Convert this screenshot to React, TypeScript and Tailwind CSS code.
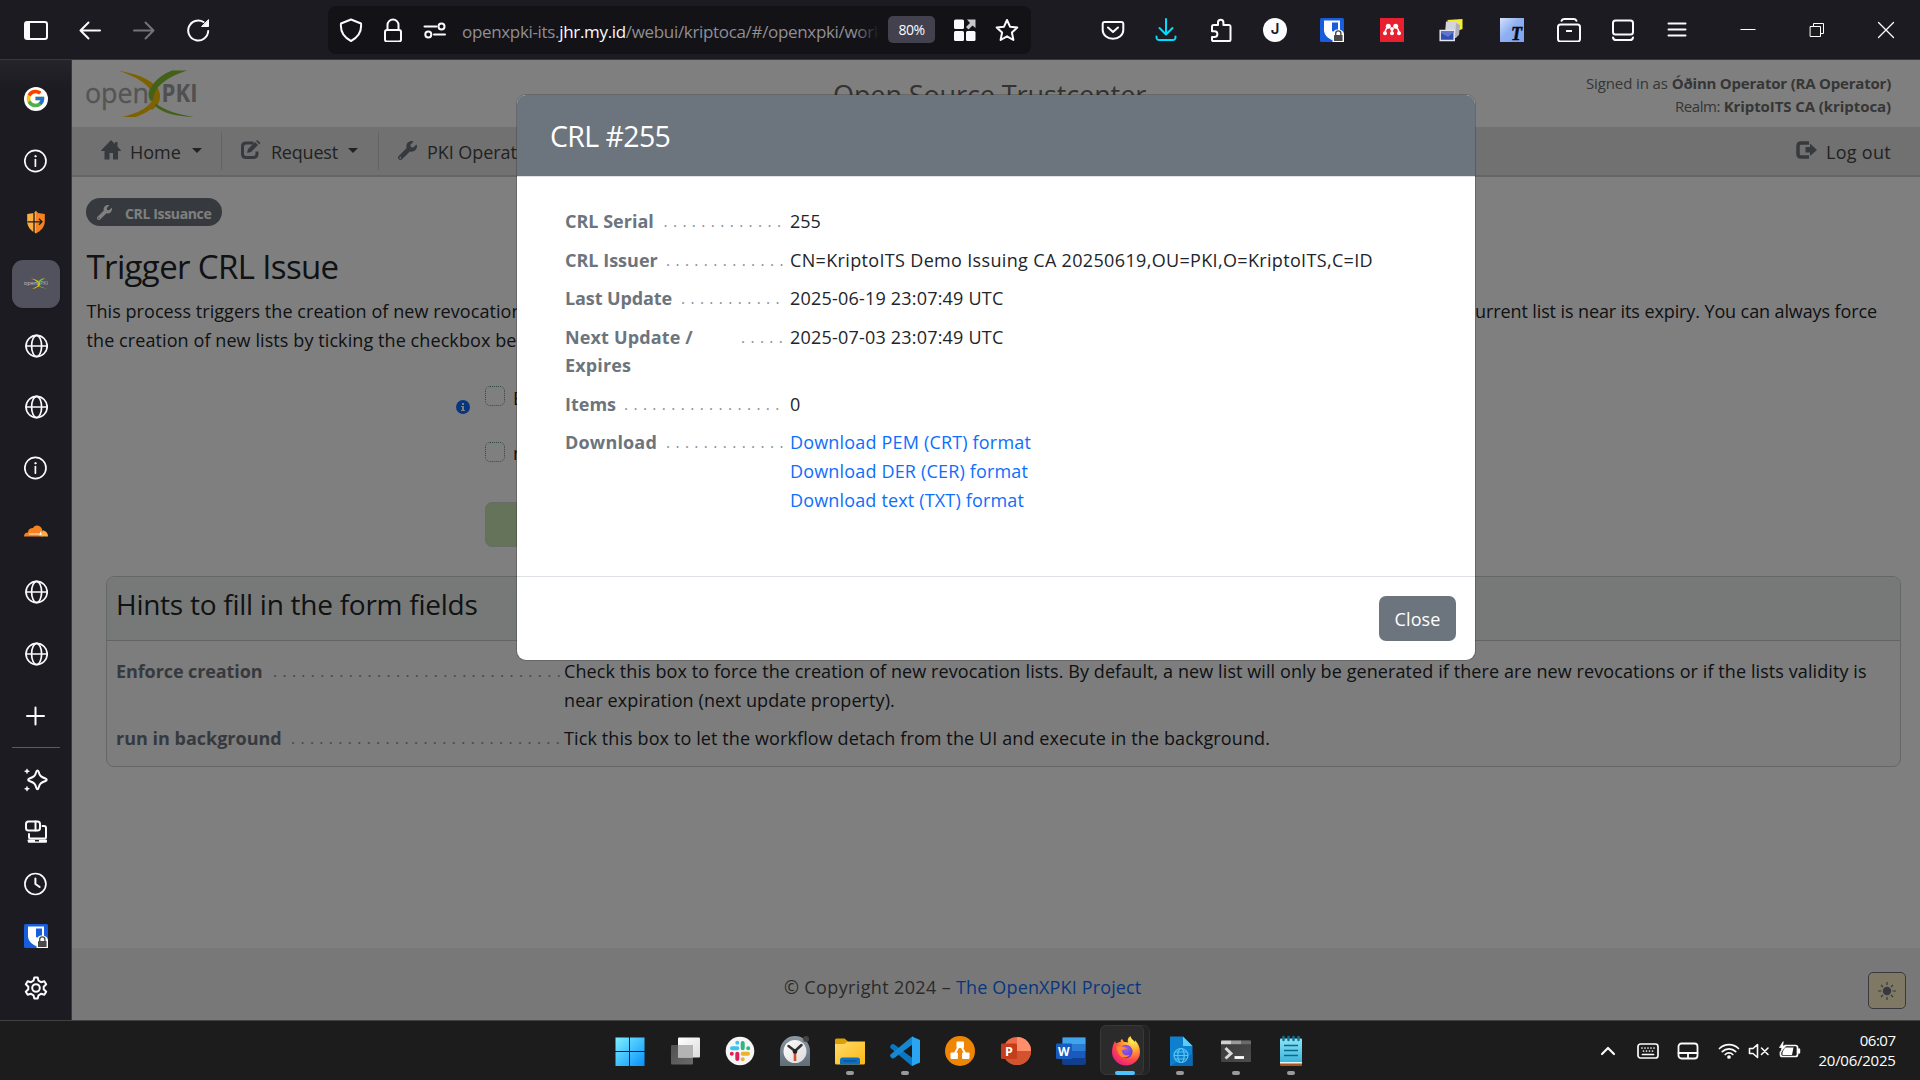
import React from "react";
import { FcGoogle } from "react-icons/fc";
import { FaWrench } from "react-icons/fa";

type Kids = { children?: React.ReactNode };

/* ---------- icon helpers ---------- */

function Line({ children, w = 2, c = "#fbfbfe", s = 24 }: Kids & { w?: number; c?: string; s?: number }) {
  return (
    <svg width={s} height={s} viewBox="0 0 24 24" fill="none" stroke={c} strokeWidth={w} strokeLinecap="round" strokeLinejoin="round" className="block shrink-0">
      {children}
    </svg>
  );
}

function Art({ children, s = 24 }: Kids & { s?: number }) {
  return (
    <svg width={s} height={s} viewBox="0 0 24 24" className="block shrink-0">
      {children}
    </svg>
  );
}

const Globe = () => (
  <Line w={1.7}>
    <circle cx="12.6" cy="12" r="10.6" />
    <ellipse cx="12.6" cy="12" rx="5" ry="10.6" />
    <path d="M2 12h21.2" />
  </Line>
);

const Info = () => (
  <Line w={1.7}>
    <circle cx="11.4" cy="12" r="10.6" />
    <path d="M11.4 10.6v6.6" />
    <circle cx="11.4" cy="7.2" r=".7" fill="#fbfbfe" strokeWidth="1" />
  </Line>
);

const Bitwarden = () => (
  <Art>
    <rect width="24" height="24" rx="1.6" fill="#175ddc" />
    <path d="M4 2.500h16V12c0 5-3.500 7.800-8 10-4.500-2.200-8-5-8-10z" fill="#fff" />
    <path d="M12 4.500h6V12c0 1.500-.5 2.500-1.500 3.500L12 13z" fill="#175ddc" />
    <path d="M12.500 24v-7.500c0-3 2.200-5 5.500-5s6 2 6 5V24z" fill="#fff" />
    <rect x="14" y="17" width="8.600" height="6" rx=".6" fill="#4a4a4a" />
    <path d="M15.700 17v-1.500a2.600 2.600 0 0 1 5.200 0V17" fill="none" stroke="#4a4a4a" strokeWidth="1.400" />
  </Art>
);

function Swoosh() {
  return (
    <>
      <path d="M32 .5c17 3 32 8 39 17 7 11-1 22-21 29.500H36c18-4 31-12 31-21C65 14 47 5.500 32 .500z" fill="#fdc400" />
      <path d="M70 15c6 9 6 18-4 25l-4-3c7-5 8-13 3-19z" fill="#fdc400" />
      <path d="M86 .500h15.500C84 6 68 15 67 30L64 28.500C62 17 70 7 86 .500z" fill="#86c232" />
      <path d="M66 16c-3 5-2 10 1 14l-2.500 1c-3-5-2.500-11 1.500-15z" fill="#86c232" />
      <path d="M70 33.500c9 7 22 11 38 13.500-17-.5-32-4-39-11z" fill="#86c232" />
    </>
  );
}

const Logo = () => (
  <svg width="112" height="48" viewBox="0 0 112 48" className="block shrink-0 overflow-visible">
    <text x="-1" y="32.500" fontFamily="'Open Sans', sans-serif" fontSize="28" fill="#a8a8a8" stroke="#a8a8a8" strokeWidth=".3" textLength="64" lengthAdjust="spacingAndGlyphs">open</text>
    <text x="75.500" y="32" fontFamily="'Open Sans', sans-serif" fontSize="24.500" fontWeight="bold" fill="#a0a0a0" textLength="36" lengthAdjust="spacingAndGlyphs">PKI</text>
    <Swoosh />
  </svg>
);

/* ---------- browser chrome ---------- */

function Toolbar() {
  return (
    <div className="flex h-[60px] shrink-0 items-center border-b border-[#38373d] bg-[#1c1b22]">
      <div className="ml-[24px] flex gap-[30px]">
        <Line w={2}>
          <rect x="1" y="4" width="22" height="17" rx="2.200" />
          <path d="M1 6a2 2 0 0 1 2-2h3v17H3a2 2 0 0 1-2-2z" fill="#fbfbfe" stroke="none" />
        </Line>
        <Line w={2}><path d="M22 12.500H2.500M10.500 4.500l-8 8 8 8" /></Line>
        <Line w={2} c="#74737a"><path d="M2 12.500h19.500M13.500 4.500l8 8-8 8" /></Line>
        <Line w={2}>
          <path d="M22.200 13A10 10 0 1 1 17.500 4" />
          <path d="M22.500 2v6.500H16z" fill="#fbfbfe" stroke="#fbfbfe" strokeWidth="1" />
        </Line>
      </div>

      <div className="ml-[118px] flex h-12 w-[703px] items-center rounded-[8px] bg-[#131217]">
        <div className="ml-[11px] flex gap-[18px]">
          <Line w={2}><path d="M12 1.500 22 5.500c.8 7.500-2 13.500-10 17.500C4 19 1.200 13 2 5.500z" /></Line>
          <Line w={2}>
            <rect x="4" y="12" width="16" height="11.500" rx="2" />
            <path d="M6.500 12V7a5.500 5.500 0 0 1 11 0v5" />
          </Line>
          <Line w={2}>
            <path d="M1.500 8.500h12M11 16.500h11" />
            <circle cx="18.500" cy="8.500" r="3" />
            <circle cx="5.300" cy="16.500" r="3" />
          </Line>
        </div>
        <div className="relative ml-[15px] w-[417px] overflow-hidden whitespace-nowrap pt-[4px] text-[17px] leading-[24px] tracking-[-0.330px] text-[#8f8e94]">
          openxpki-its.<span className="text-[#fbfbfe]">jhr.my.id</span>/webui/kriptoca/#/openxpki/workflow
          <div className="absolute inset-y-0 right-0 w-6 bg-gradient-to-r from-transparent to-[#131217]" />
        </div>
        <div className="ml-[9px] flex h-[27px] w-[47px] items-center justify-center rounded-[5px] bg-[#42414d] text-[14px] tracking-[-0.5px] text-[#fbfbfe]">80%</div>
        <div className="ml-[18px] flex gap-[18px]">
          <Art>
            <rect x="1" y="1.500" width="10" height="9.500" rx="1.500" fill="#fbfbfe" />
            <rect x="1" y="13" width="10" height="10" rx="1.500" fill="#fbfbfe" />
            <rect x="13" y="13" width="9.500" height="10" rx="1.500" fill="#fbfbfe" />
            <path d="M14 1.500h8.500V10l-3-2.500-4 4-2.500-2.500 4-4z" fill="#c8c8cc" />
          </Art>
          <Line w={2}><path d="m12 2 3 6.700 7.300.8-5.400 5 1.500 7.500-6.400-3.700L5.600 22l1.500-7.500-5.400-5L9 8.700z" /></Line>
        </div>
      </div>

      <div className="ml-[70px] flex items-center">
        <Line w={2}>
          <path d="M3.500 4h17a1.800 1.800 0 0 1 1.800 1.800V12a10.300 8.800 0 0 1-20.600 0V5.800A1.800 1.800 0 0 1 3.500 4z" />
          <path d="m7 9.500 5 4.500 5-4.500" />
        </Line>
        <div className="ml-[29px]"><Line w={2} c="#00ddff"><path d="M12 1v15M5.500 10l6.500 6.500L18.500 10M2.500 18.500c0 3 1 3.500 3 3.500h13c2 0 3-.5 3-3.500" /></Line></div>
        <div className="ml-[32px]"><Line w={2}><path d="M2 10V8.500A1.500 1.500 0 0 1 3.500 7H8V4.500a2.700 2.700 0 0 1 5.400 0V7h5A1.600 1.600 0 0 1 20.500 8.600V21.400A1.600 1.600 0 0 1 18.900 23H3.600A1.600 1.600 0 0 1 2 21.400V19h2.500a2.900 2.900 0 0 0 0-5.800H2z" /></Line></div>
        <div className="ml-[29px] flex h-6 w-6 items-center justify-center rounded-full bg-[#fbfbfe] font-['Inter'] text-[15px] font-semibold text-[#1c1b22]">J</div>
        <div className="ml-[33px]"><Bitwarden /></div>
        <div className="ml-[36px]">
          <Art>
            <rect width="24" height="24" fill="#e9202f" />
            <path d="M5 15.500C5 12 6 10.500 8 9M12 15.500V12M19 15.500C19 12 18 10.500 16 9" stroke="#fff" strokeWidth="1.500" fill="none" />
            <g fill="#fff">
              <circle cx="8.300" cy="8.300" r="2.500" /><circle cx="15.700" cy="8.300" r="2.500" /><circle cx="12" cy="10.800" r="1.900" />
              <circle cx="5" cy="15.300" r="2" /><circle cx="12" cy="15.300" r="2" /><circle cx="19" cy="15.300" r="2" />
            </g>
          </Art>
        </div>
        <div className="ml-[35px]">
          <Art>
            <path d="M8 2l15.500-1v10L18 13z" fill="#f6ee2c" />
            <path d="M7 3.500 17 3l3 3-2 13-4 2-8-6z" fill="#d4d4de" />
            <path d="M17 5l4 2-1 10-4 3z" fill="#b0b0bd" />
            <rect x="1.200" y="12.500" width="14" height="10" fill="#2f4fb4" stroke="#e6e6f0" strokeWidth="1.500" />
            <path d="M2 15l7 4 6-5v-1H2z" fill="#5f76cc" />
          </Art>
        </div>
        <div className="ml-[37px]">
          <Art>
            <defs><linearGradient id="sky" x1="0" y1="0" x2="1" y2="1"><stop offset="0" stopColor="#d5e2fb" /><stop offset=".45" stopColor="#8fb0f2" /><stop offset="1" stopColor="#7da1ee" /></linearGradient></defs>
            <rect width="24" height="24" fill="url(#sky)" />
            <text x="11" y="22" fontFamily="'Liberation Serif', serif" fontSize="18" fontStyle="italic" fontWeight="bold" fill="#0a0a14" stroke="#0a0a14" strokeWidth=".5">T</text>
          </Art>
        </div>
        <div className="ml-[33px]"><Line w={2}><path d="M4.500 2.800c.5-1.300 1.500-1.800 3-1.800h9c1.500 0 2.500.5 3 1.800" /><rect x="1" y="6.500" width="22" height="17" rx="2.500" /><path d="M9 13h6" strokeLinecap="butt" /></Line></div>
        <div className="ml-[30px]"><Line w={2}><rect x="2" y="2.500" width="20" height="14" rx="2.500" /><path d="M2 19.500c.3 2 1.300 2.500 3 2.500h14c1.700 0 2.700-.5 3-2.500" /></Line></div>
        <div className="ml-[30px]"><Line w={2}><path d="M3.500 5.500h17M3.500 11.500h17M3.500 17.500h17" /></Line></div>
        <div className="ml-[47px]"><Line w={1} c="#fff"><path d="M4.500 11.500h15" strokeLinecap="butt" /></Line></div>
        <div className="ml-[45px]"><Line w={1} c="#fff"><path d="M5.500 8.500h10v10h-10zM8.500 8.500v-3h10v10h-3" strokeLinejoin="miter" /></Line></div>
        <div className="ml-[45px]"><Line w={1.300} c="#fff"><path d="m4.500 4.500 15 15m0-15-15 15" /></Line></div>
      </div>
    </div>
  );
}

const Slot = ({ children }: Kids) => <div className="flex h-[61.700px] shrink-0 items-center justify-center">{children}</div>;
const Tool = ({ children }: Kids) => <div className="flex h-[52px] shrink-0 items-center justify-center">{children}</div>;

function Sidebar() {
  return (
    <div className="flex w-[72px] shrink-0 flex-col border-r border-[#38373d] bg-gradient-to-b from-[#25242b] via-[#1c1b22] via-3% to-[#1c1b22] pt-[8px]">
      <Slot><div className="flex h-6 w-6 items-center justify-center rounded-full bg-white"><FcGoogle size={21} /></div></Slot>
      <Slot><Info /></Slot>
      <Slot>
        <Art>
          <path d="M12 .8 14 3l6.800 1v7c0 6-3.500 9.500-8.800 12.500z" fill="#f6821f" />
          <path d="M12 .8 10 3 3.200 4v7c0 6 3.500 9.500 8.800 12.500z" fill="#fbad41" />
          <path d="M3.500 11.800h14.500M15 8.800l3 3-3 3M10 3v20" stroke="#1c1b22" strokeWidth="1.300" fill="none" />
        </Art>
      </Slot>
      <Slot>
        <div className="flex h-12 w-12 items-center justify-center rounded-[11px] bg-[#52525e] shadow">
          <svg width="24" height="11" viewBox="0 0 112 48" className="block">
            <text x="-1" y="32" fontFamily="'Open Sans', sans-serif" fontSize="28" fill="#c4c4c4" textLength="64" lengthAdjust="spacingAndGlyphs">open</text>
            <text x="75" y="32" fontFamily="'Open Sans', sans-serif" fontSize="26" fill="#b5b5b5" textLength="37" lengthAdjust="spacingAndGlyphs">PKI</text>
            <Swoosh />
          </svg>
        </div>
      </Slot>
      <Slot><Globe /></Slot>
      <Slot><Globe /></Slot>
      <Slot><div className="-mt-[2px]"><Info /></div></Slot>
      <Slot>
        <Art>
          <path d="M0 17.500c0-2.500 1.500-4 4-4C4 9.500 8 9 9 9c1-2 3-2.700 4.500-2.500 3 .3 5 3 4.800 5.500L18 17.500z" fill="#f6821f" />
          <path d="M17 17.500l1.500-6c3 0 5.500 2.500 5.500 6z" fill="#fbad41" />
          <path d="M5 15h13" stroke="#fff" strokeWidth=".9" />
          <path d="M17 12.500l-1 4" stroke="#fff" strokeWidth="1" />
        </Art>
      </Slot>
      <Slot><Globe /></Slot>
      <Slot><Globe /></Slot>
      <Slot><Line w={2}><path d="M11.500 3.500v17M3 12h17" /></Line></Slot>
      <div className="mb-[6px] ml-3 h-px w-12 shrink-0 bg-[#5b5a62]" />
      <Tool>
        <Line w={2}>
          <path d="M13.500 2.500c.6 0 .8.4 1 1 1.200 4.300 2.200 5.300 7 7 .8.300 1.200.7 1.200 1.300s-.4 1-1.200 1.200c-4.800 1.700-5.800 2.700-7 7-.2.700-.4 1.200-1 1.200s-.9-.5-1.100-1.200c-1.200-4.300-2.200-5.300-7-7-.8-.2-1.200-.6-1.200-1.200s.4-1 1.200-1.300c4.800-1.700 5.800-2.700 7-7 .2-.6.500-1 1.100-1z" />
          <path d="M3 1.500v3.600M1.200 3.300h3.600M3 19v3.600M1.200 20.800h3.600" strokeWidth="1.500" />
        </Line>
      </Tool>
      <Tool>
        <Line w={2}>
          <rect x="2" y="1.500" width="14" height="9" rx="2.500" />
          <path d="M11.500 1.500v9M5 14v3.500M18.500 6h1.500a2 2 0 0 1 2 2v9c0 1-.5 1.500-1.500 1.500H6.500c-1 0-1.500-.5-1.500-1.500" />
          <path d="M4.500 20.500H22v1.300H5z" fill="#fbfbfe" />
          <path d="M11 20.700h4" stroke="#1c1b22" strokeWidth="1.500" strokeLinecap="butt" />
        </Line>
      </Tool>
      <Tool><Line w={1.700}><circle cx="11.400" cy="12" r="10.500" /><path d="M11.400 6.500V12l4.300 3" strokeWidth="2" /></Line></Tool>
      <Tool><Bitwarden /></Tool>
      <Tool>
        <Line w={2}>
          <circle cx="12" cy="12" r="3.800" />
          <path d="M10.300 1.400h3.400l.8 3.300 2.500 1.500 3.300-1 1.900 3-2.500 2.500v2.600l2.500 2.500-1.900 3-3.300-1-2.500 1.500-.8 3.300h-3.400l-.8-3.300L7 17.800l-3.300 1-1.900-3 2.500-2.500v-2.600L1.800 8.200l1.900-3 3.300 1 2.500-1.500z" />
        </Line>
      </Tool>
    </div>
  );
}

/* ---------- web page ---------- */

const Caret = () => <svg width="10" height="5" viewBox="0 0 10 5" className="block"><path d="M0 0h10L5 5z" fill="#444" /></svg>;

function NavBar() {
  return (
    <div className="flex h-[50px] shrink-0 items-center border-b-2 border-[#cbcbcb] bg-[#e2e2e2] pb-[2px] text-[18px] text-[#444]">
      <svg width="20" height="20" viewBox="0 0 20 20" fill="#6c757d" className="ml-[29px] block"><path d="M10 0l4 4V2h2.500v4.500L20.500 11H17v8.500h-5V13H8.500v6.500h-5V11H-.5z" /></svg>
      <span className="ml-[9px] pt-[4px]">Home</span>
      <div className="ml-[11px]"><Caret /></div>
      <div className="ml-[19px] mt-[2px] h-[38px] w-px bg-[#c8c8c8]" />
      <svg width="20" height="20" viewBox="0 0 20 20" className="ml-[19px] block">
        <path d="M12.500 3H5Q1.500 3 1.500 6.500V14Q1.500 17.500 5 17.500H12.500Q16 17.500 16 14v-2.500" fill="none" stroke="#6c757d" strokeWidth="3" />
        <path d="M6 13l1-4 7-7 3 3-7 7zM15 1l1-1 3.500 3-1.300 1.200z" fill="#6c757d" />
      </svg>
      <span className="ml-[10px] pt-[4px] tracking-[-0.190px]">Request</span>
      <div className="ml-[10px]"><Caret /></div>
      <div className="ml-[20px] mt-[2px] h-[38px] w-px bg-[#c8c8c8]" />
      <FaWrench size={19} color="#6c757d" className="ml-[19px]" />
      <span className="ml-[10px] pt-[4px] tracking-[-0.050px]">PKI Operations</span>
      <svg width="21" height="18" viewBox="0 0 21 18" className="ml-auto block">
        <path d="M13 2H5Q2 2 2 5v8q0 3 3 3h8" fill="none" stroke="#6c757d" strokeWidth="3.500" />
        <path d="M9.500 6H14V2.500L21 9l-7 6v-3.500H9.500z" fill="#6c757d" />
      </svg>
      <span className="ml-[9px] mr-[29px] pt-[4px] tracking-[0.290px]">Log out</span>
    </div>
  );
}

function Dots({ n }: { n: number }) {
  return <span className="whitespace-pre text-[15.500px] font-normal tracking-[0.680px] text-[#8a9299]">{". ".repeat(n)}</span>;
}

function Field({ label, lw, n, children }: Kids & { label: string; lw: string; n: number }) {
  return (
    <div className="mb-[9.600px] flex leading-[28.800px]">
      <div className="flex w-[225px] shrink-0">
        <div className={"shrink-0 whitespace-pre-line font-bold text-[#6c757d] " + lw}>{label}</div>
        <Dots n={n} />
      </div>
      <div className="text-[#212529]">{children}</div>
    </div>
  );
}

function Modal() {
  return (
    <div className="mt-[35px] flex h-[565px] w-[958px] flex-col self-start overflow-hidden rounded-[9px] bg-white shadow-[0_0_0_1px_rgba(0,0,0,0.18)]">
      <div className="h-[82px] shrink-0 border-b border-[#dee2e6] bg-[#6c757d] pl-[33px] pt-[20px] text-[28.500px] leading-[43px] tracking-[-0.600px] text-white">CRL #255</div>
      <div className="flex-1 pl-[48px] pt-[30.400px] text-[18px]">
        <Field label="CRL Serial" lw="w-[98.500px]" n={13}><span>255</span></Field>
        <Field label="CRL Issuer" lw="w-[101px]" n={13}><span className="tracking-[0.337px]">CN=KriptoITS Demo Issuing CA 20250619,OU=PKI,O=KriptoITS,C=ID</span></Field>
        <Field label="Last Update" lw="w-[116px] tracking-[-0.100px]" n={11}><span className="tracking-[0.200px]">2025-06-19 23:07:49 UTC</span></Field>
        <Field label={"Next Update /\nExpires"} lw="w-[176px] tracking-[0.150px]" n={5}><span className="tracking-[0.200px]">2025-07-03 23:07:49 UTC</span></Field>
        <Field label="Items" lw="w-[59px]" n={17}>0</Field>
        <Field label="Download" lw="w-[101px] tracking-[0.170px]" n={13}>
          <div className="flex flex-col text-[#0d6efd]">
            <a className="tracking-[0.175px]">Download PEM (CRT) format</a>
            <a className="tracking-[0.170px]">Download DER (CER) format</a>
            <a className="tracking-[0.160px]">Download text (TXT) format</a>
          </div>
        </Field>
      </div>
      <div className="flex h-[84px] shrink-0 items-center justify-end border-t border-[#dee2e6] pr-[19px]">
        <button className="h-[45px] w-[77px] rounded-[7px] bg-[#6c757d] pt-[1px] text-[18px] tracking-[0.100px] text-white">Close</button>
      </div>
    </div>
  );
}

function Hint({ label, lw, n, children }: Kids & { label: string; lw: string; n: number }) {
  return (
    <div className="mb-[9.600px] flex leading-[28.800px]">
      <div className="flex w-[448px] shrink-0">
        <div className={"shrink-0 font-bold text-[#6c757d] " + lw}>{label}</div>
        <Dots n={n} />
      </div>
      <div className="whitespace-nowrap">{children}</div>
    </div>
  );
}

const Box = () => <div className="h-5 w-5 shrink-0 rounded-[5px] border border-dotted border-[#5d8f7e]" />;

function Page() {
  return (
    <div className="relative flex flex-1 flex-col overflow-hidden bg-white text-[18px] text-[#212529]">
      <div className="flex h-[67px] shrink-0 items-start">
        <div className="ml-[14px] mt-[10px]"><Logo /></div>
        <div className="ml-[635px] mt-[15px] whitespace-nowrap text-[27px] leading-[40px] tracking-[-0.100px] text-[#666]">Open Source Trustcenter</div>
        <div className="ml-auto mr-[29px] mt-[12px] text-right text-[15px] leading-[23px] text-[#6c6c6c]">
          <div><span className="tracking-[-0.100px]">Signed in as </span><b className="tracking-[-0.210px]">Óðinn Operator (RA Operator)</b></div>
          <div><span className="tracking-[-0.400px]">Realm: </span><b className="tracking-[-0.080px]">KriptoITS CA (kriptoca)</b></div>
        </div>
      </div>
      <NavBar />
      <div className="flex flex-1 flex-col">
        <div className="ml-[14px] mt-[21px] flex h-[28px] w-[136px] shrink-0 items-center rounded-full bg-[#6c757d] text-white">
          <FaWrench size={15} className="ml-[11px]" />
          <span className="ml-[13px] pt-[3px] text-[14px] font-bold tracking-[-0.350px]">CRL Issuance</span>
        </div>
        <h1 className="ml-[14.500px] mt-[22px] text-[33px] leading-[38px] tracking-[-0.636px]">Trigger CRL Issue</h1>
        <div className="ml-[14.500px] mr-[43px] mt-[10.800px] whitespace-nowrap leading-[28.800px]">
          <div className="flex justify-between">
            <span className="tracking-[0.058px]">This process triggers the creation of new revocation</span>
            <span className="tracking-[-0.106px]">current list is near its expiry. You can always force</span>
          </div>
          <div className="tracking-[0.088px]">the creation of new lists by ticking the checkbox below.</div>
        </div>
        <div className="mt-[32px] flex h-[56px]">
          <div className="ml-[384px] mt-[14px] flex h-[14px] w-[14px] items-center justify-center rounded-full bg-[#0d6efd]">
            <svg width="6" height="8" viewBox="0 0 6 8" fill="#fff"><path d="M2 0h2v2H2zM1 3h3v4h1v1H1V7h1V4H1z" /></svg>
          </div>
          <div className="ml-[15px]"><Box /></div>
          <span className="ml-[8px] mt-[-2.500px] leading-[28px]">Enforce creation</span>
        </div>
        <div className="ml-[413px] flex h-[60px]">
          <Box />
          <span className="ml-[8px] mt-[-3px] leading-[28px]">run in background</span>
        </div>
        <div className="ml-[413px] h-[45px] w-[160px] shrink-0 rounded-[7px] border border-[#d0d8cc] bg-[#c8e6b2]" />
        <div className="ml-[34px] mt-[29px] h-[191px] w-[1795px] shrink-0 overflow-hidden rounded-[8px] border border-[#cbcccd] bg-[#fafafa]">
          <div className="h-[64px] border-b border-[#c4c8ca] bg-[#eff3f0] pl-[9px] pt-[6px] text-[28px] leading-[42px] tracking-[-0.260px]">Hints to fill in the form fields</div>
          <div className="pl-[9px] pt-[15.600px]">
            <Hint label="Enforce creation" lw="w-[157px] tracking-[-0.090px]" n={31}>
              <div className="tracking-[0.090px]">Check this box to force the creation of new revocation lists. By default, a new list will only be generated if there are new revocations or if the lists validity is</div>
              <div className="tracking-[0.086px]">near expiration (next update property).</div>
            </Hint>
            <Hint label="run in background" lw="w-[175px]" n={29}><span className="tracking-[0.108px]">Tick this box to let the workflow detach from the UI and execute in the background.</span></Hint>
          </div>
        </div>
      </div>
      <div className="flex h-[72px] shrink-0 items-center bg-[#f1f1f1] text-[#555]">
        <div className="ml-[712px] whitespace-nowrap pt-[7px]">
          <span className="tracking-[0.361px]">© Copyright 2024 – </span><a className="tracking-[0.140px] text-[#0d6efd]">The OpenXPKI Project</a>
        </div>
        <div className="ml-auto mr-[14px] mt-[13px] flex h-[37px] w-[38px] items-center justify-center rounded-[5px] border border-[#6c757d] bg-[#fff0c8]">
          <svg width="18" height="18" viewBox="0 0 18 18" className="mt-[1px]">
            <circle cx="9" cy="9" r="4.200" fill="#6c757d" />
            <path d="M9 0v3M9 15v3M0 9h3.500M14.500 9H18M3 3l2 2M13 13l2 2M15 3l-2 2M5 13l-2 2" stroke="#6c757d" strokeWidth="1.200" />
          </svg>
        </div>
      </div>
      <div className="absolute inset-0 flex justify-center bg-black/50"><Modal /></div>
    </div>
  );
}

/* ---------- taskbar ---------- */

function TaskIcon({ children, run, active }: Kids & { run?: boolean; active?: boolean }) {
  return (
    <div className="relative flex h-[60px] w-[55.150px] items-center justify-center">
      {active && <div className="absolute left-[9px] top-[4px] h-[50px] w-[43px] rounded-[6px] border border-[#303030] bg-[#232323]" />}
      {active && <div className="absolute left-[2px] top-[4px] h-[50px] w-[44px] rounded-[6px] border border-[#383838] bg-[#2b2b2b]" />}
      <svg width="32" height="32" viewBox="0 0 32 32" className="relative block">{children}</svg>
      {run && <div className="absolute bottom-[6px] left-[23px] h-[4px] w-[8px] rounded-full bg-[#9a9a9a]" />}
      {active && <div className="absolute bottom-[6px] left-[17px] h-[4px] w-[20px] rounded-full bg-[#4cc2ff]" />}
    </div>
  );
}

function G({ id, a, b, x2 = 1, y2 = 1 }: { id: string; a: string; b: string; x2?: number; y2?: number }) {
  return <linearGradient id={id} x1="0" y1="0" x2={x2} y2={y2}><stop offset="0" stopColor={a} /><stop offset="1" stopColor={b} /></linearGradient>;
}

function Taskbar() {
  return (
    <div className="relative flex h-[60px] shrink-0 items-center justify-center border-t border-[#414141] bg-[#1c1c1c] pl-[1px]">
      <TaskIcon>
        <defs><linearGradient id="win" gradientUnits="userSpaceOnUse" x1="2" y1="2" x2="30" y2="30"><stop offset="0" stopColor="#7df0ff" /><stop offset="1" stopColor="#0a93fb" /></linearGradient></defs>
        <path d="M1.500 2.500H15V16H1.500zM16 2.500H30.500V16H16zM1.500 17H15v14H1.500zM16 17h14.500v14H16z" fill="url(#win)" />
      </TaskIcon>
      <TaskIcon>
        <defs><G id="tv1" a="#ffffff" b="#dcdcdc" /><G id="tv2" a="#505050" b="#6a6a6a" /></defs>
        <rect x="2" y="10" width="22" height="19.500" rx="1" fill="url(#tv2)" />
        <rect x="9" y="2.500" width="22" height="20" rx="1" fill="url(#tv1)" />
        <path d="M9 10h15v12.500H9z" fill="#b4b4b4" />
      </TaskIcon>
      <TaskIcon>
        <circle cx="16" cy="16" r="14.300" fill="#f6f6f6" />
        <g strokeWidth="4" strokeLinecap="round">
          <path d="M13.300 13.300H8M13.300 7.800v0" stroke="#36c5f0" />
          <path d="M18.700 13.300V8M24.200 13.300v0" stroke="#2eb67d" />
          <path d="M18.700 18.700H24M18.700 24.200v0" stroke="#ecb22e" />
          <path d="M13.300 18.700V24M7.800 18.700v0" stroke="#e01e5a" />
        </g>
      </TaskIcon>
      <TaskIcon>
        <defs><G id="ck" a="#8b98a3" b="#5f6d79" x2={0} /><G id="ckf" a="#fff" b="#dadada" /></defs>
        <path d="M1 31V16a15 15 0 0 1 30 0v15z" fill="url(#ck)" />
        <circle cx="27" cy="4" r="3" fill="#444" />
        <circle cx="16" cy="16.500" r="11.500" fill="url(#ckf)" />
        <path d="M9.500 11l6.500 5 6.500-6" stroke="#333" strokeWidth="2.500" fill="none" strokeLinecap="round" />
        <path d="M16 17v9" stroke="#d4502a" strokeWidth="2.600" />
        <circle cx="16" cy="16.500" r="2.300" fill="#222" />
      </TaskIcon>
      <TaskIcon run>
        <defs><G id="fo" a="#ffdc6a" b="#fcb714" /></defs>
        <path d="M1 5a1.500 1.500 0 0 1 1.500-1.500h8L14 6.500v4H1z" fill="#dba008" />
        <path d="M1 9h9l4-2.500h17V28a1.500 1.500 0 0 1-1.500 1.500h-27A1.500 1.500 0 0 1 1 28z" fill="url(#fo)" />
        <path d="M6 29.500V25a2.500 2.500 0 0 1 2.500-2.500h15A2.500 2.500 0 0 1 26 25v4.500z" fill="#0f6fc4" />
        <path d="M9.500 26h13" stroke="#0a4d93" strokeWidth="1.200" />
      </TaskIcon>
      <TaskIcon run>
        <path d="M1 11.500l2-2.500 2 .2L24 23.500V31l-1.500-.3L1.500 13z" fill="#0b77c2" />
        <path d="M1 21l2 2.500 2-.2L24 9V1.500L22.500 2 1.500 19.500z" fill="#1588d2" />
        <path d="M23 1.500 31 5v22.500L23 31z" fill="#2aa5f2" />
      </TaskIcon>
      <TaskIcon>
        <circle cx="16" cy="16" r="15" fill="#ef8505" />
        <path d="M16 9l-6 11M16 9l6 11" stroke="#fff" strokeWidth="2" />
        <rect x="12.500" y="6.500" width="7.500" height="6.500" rx="1" fill="#fff" />
        <rect x="6.500" y="17.500" width="7.500" height="6.500" rx="1" fill="#fff" />
        <rect x="18" y="17.500" width="7.500" height="6.500" rx="1" fill="#fff" />
      </TaskIcon>
      <TaskIcon>
        <circle cx="17" cy="16" r="14" fill="#ed6c47" />
        <path d="M17 2a14 14 0 0 1 14 14H17z" fill="#ff8f6b" />
        <path d="M3 16h28a14 14 0 0 1-28 0z" fill="#d35230" />
        <rect x="1" y="8.500" width="16" height="15.500" rx="1.300" fill="#c43e1c" />
        <text x="5" y="21" fontFamily="'Open Sans', sans-serif" fontSize="12.500" fontWeight="bold" fill="#fff">P</text>
      </TaskIcon>
      <TaskIcon>
        <rect x="7.500" y="2.500" width="23" height="27" rx="1.400" fill="#185abd" />
        <path d="M7.500 2.500h23V9h-23z" fill="#41a5ee" />
        <path d="M7.500 9h23v7h-23z" fill="#2b7cd3" />
        <path d="M7.500 23h23v6.500h-23z" fill="#103f91" />
        <rect x="1" y="8.500" width="16" height="15.500" rx="1.300" fill="#185abd" />
        <text x="3" y="20.500" fontFamily="'Open Sans', sans-serif" fontSize="12" fontWeight="bold" fill="#fff">W</text>
      </TaskIcon>
      <TaskIcon active>
        <defs>
          <radialGradient id="ff" cx=".75" cy=".15" r="1"><stop offset="0" stopColor="#fff44f" /><stop offset=".35" stopColor="#ffa436" /><stop offset=".65" stopColor="#ff4a4a" /><stop offset="1" stopColor="#e31587" /></radialGradient>
          <radialGradient id="ffp" cx=".5" cy=".3" r=".7"><stop offset="0" stopColor="#a05bff" /><stop offset="1" stopColor="#5b3cc4" /></radialGradient>
        </defs>
        <path d="M2 17c0-5 1.500-8 3-11 .5 1.500 1 2 1.500 2.500C8 7 9.500 7 11 7c-1-1-.5-2 1-3l2 3c3 0 4 .5 4 .5C17 4 19 2 20.500 1c.5 3 3 4.500 4.500 6 0-1 0-1.500-.2-2C28 8 30 12 30 17a14 13.500 0 0 1-28 0z" fill="url(#ff)" />
        <circle cx="15.800" cy="16.500" r="6.800" fill="url(#ffp)" />
        <path d="M6 12c4-2 7-1 11 1.500-2 1-4 1-5 2 0 4 4 6 8 4-3 4-9 4-11 0-1-2-2-5-3-7.500z" fill="#ff8a2a" />
      </TaskIcon>
      <TaskIcon run>
        <path d="M5 1.500h13l9.500 9.500v20H5z" fill="#0f7fd0" />
        <path d="M18 1.500l9.500 9.500H18z" fill="#5ecdf5" />
        <path d="M5 31l22.500-12v12z" fill="#0a6ab8" />
        <g fill="none" stroke="#54c6ef" strokeWidth="1.200"><circle cx="16" cy="20.500" r="7" /><ellipse cx="16" cy="20.500" rx="3.200" ry="7" /><path d="M9 20.500h14M10 17h12M10 24h12" /></g>
      </TaskIcon>
      <TaskIcon run>
        <defs><G id="tm" a="#3a3a3a" b="#4c4c4c" /></defs>
        <rect x="1" y="5.500" width="30" height="21.500" rx="1.300" fill="url(#tm)" />
        <path d="M1 9.200V6.500q0-1 1-1h9v3.700z" fill="#d0d0d0" /><path d="M11 5.500h10v3.700H11z" fill="#9a9a9a" /><path d="M21 5.500h9q1 0 1 1v2.700H21z" fill="#6a6a6a" />
        <path d="M5.500 13l5.500 5.500-5.500 5" fill="none" stroke="#d8d8d8" strokeWidth="3" />
        <path d="M14.500 22.500H24" stroke="#fff" strokeWidth="2.800" />
      </TaskIcon>
      <TaskIcon run>
        <defs><G id="np" a="#8ce4f5" b="#3db4dc" x2={0} /></defs>
        <path d="M5 27h22v3q0 1-1 1H6q-1 0-1-1z" fill="#b0561c" />
        <path d="M5 25h22v3.500H5z" fill="#e8f3f5" />
        <path d="M5 4.500q0-1 1-1h20q1 0 1 1V27H5z" fill="url(#np)" />
        <path d="M9 10.500h14M9 15.500h14M9 20.500h14" stroke="#0b6a8c" strokeWidth="1.700" />
        <path d="M8.500 2v3M13.500 2v3M18.500 2v3M23.500 2v3" stroke="#127396" strokeWidth="2.500" strokeLinecap="round" />
      </TaskIcon>

      <div className="absolute inset-y-0 right-0 flex items-center text-white">
        <Line w={2.200} s={24}><path d="m6 15 6-6 6 6" /></Line>
        <div className="ml-[16px]">
          <Line w={1.700}>
            <rect x="2" y="5" width="20" height="14" rx="2.500" />
            <path d="M6 9h0M9 9h0M12 9h0M15 9h0M18 9h0M7.500 12h0M10.500 12h0M13.500 12h0M16.500 12h0M6.500 15.500h11" />
          </Line>
        </div>
        <div className="ml-[16px]"><Line w={1.800}><rect x="2.500" y="4.500" width="19" height="15" rx="3" /><path d="M2.500 14h19M12 14v5" /></Line></div>
        <div className="ml-[17px]">
          <Line w={1.700}><path d="M2.500 9.500a13.500 13.500 0 0 1 19 0M5.300 12.700a9.500 9.500 0 0 1 13.400 0M8.200 15.500a5.400 5.400 0 0 1 7.600 0" /><circle cx="12" cy="18" r="1" fill="#fff" /></Line>
        </div>
        <div className="ml-[6px]"><Line w={1.600}><path d="M2.500 9.500v5H6l4.500 4V5.500L6 9.500zM14.500 9l6.500 6.500M21 9l-6.500 6.500" /></Line></div>
        <div className="ml-[6px]">
          <Line w={1.700}>
            <path d="M8 6.500h10.500a2 2 0 0 1 2 2v7a2 2 0 0 1-2 2h-13a2 2 0 0 1-2-2V13" />
            <path d="M8 8.500h8.500L15 16H5.500v-3z" fill="#fff" stroke="none" />
            <path d="M22 10.500v3" strokeWidth="2.400" />
            <path d="M6 3 2.500 8.500H5L4 13l4.500-6H6z" fill="#fff" strokeWidth=".8" />
          </Line>
        </div>
        <div className="mb-[2px] ml-[18px] mr-[24.500px] w-[77px] whitespace-nowrap text-right text-[15px] leading-[20px] tracking-[-0.260px]">
          <div className="tracking-[-0.500px]">06:07</div>
          <div>20/06/2025</div>
        </div>
      </div>
    </div>
  );
}

export default function App() {
  return (
    <div className="flex h-[1080px] w-[1920px] flex-col overflow-hidden bg-[#1c1b22] font-['Open_Sans','Noto_Sans',sans-serif]">
      <Toolbar />
      <div className="flex min-h-0 flex-1">
        <Sidebar />
        <Page />
      </div>
      <Taskbar />
    </div>
  );
}
